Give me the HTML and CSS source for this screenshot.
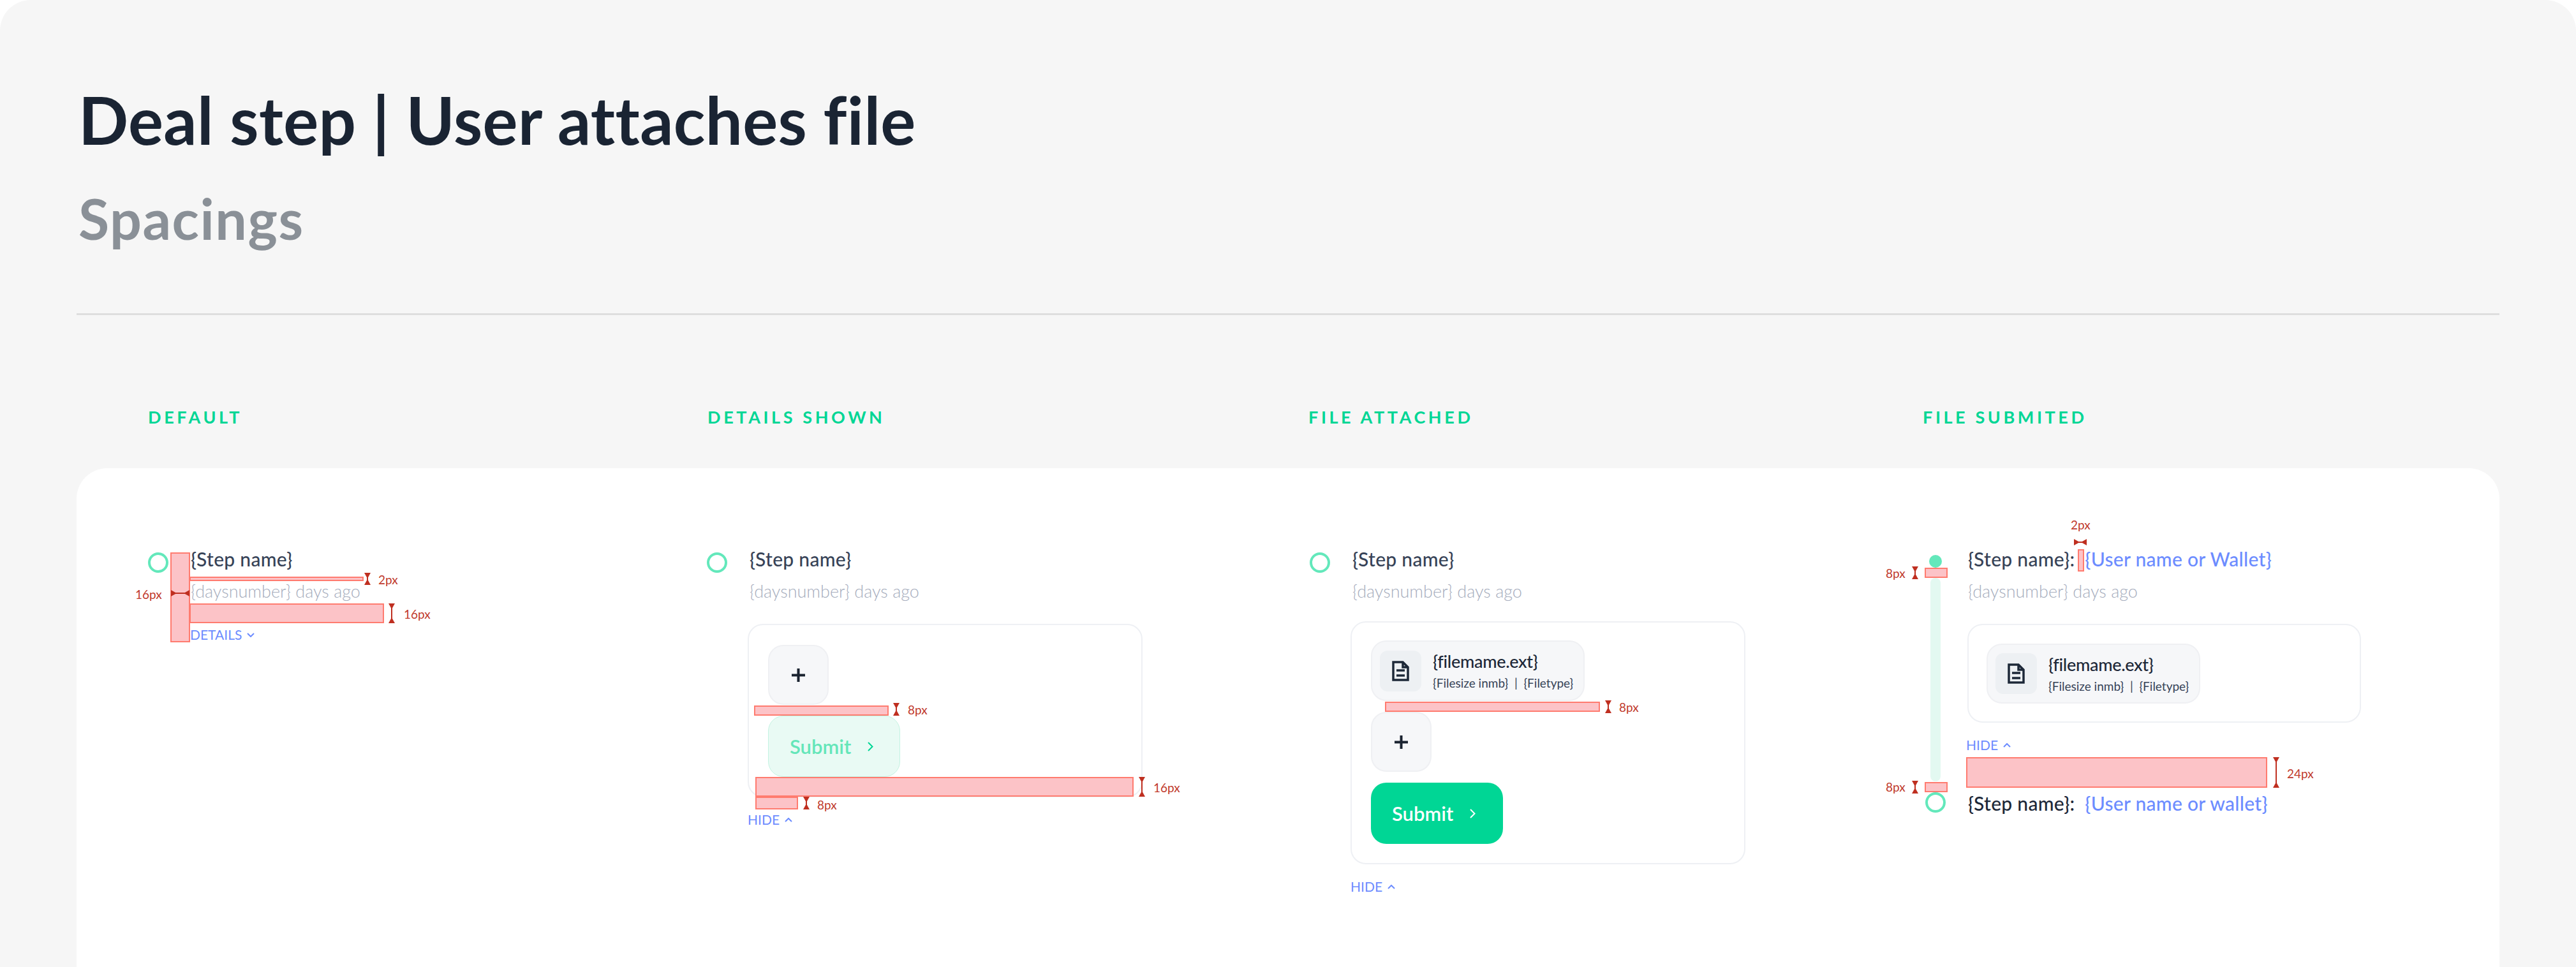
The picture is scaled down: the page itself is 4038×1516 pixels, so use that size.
FILE: index.html
```html
<!DOCTYPE html>
<html lang="en">
<head>
    <meta charset="utf-8">
    <title>Deal step | User attaches file</title>
    <link rel="stylesheet" href="styles.css">
</head>
<body>
<div class="sheet">
    <header class="head">
        <h1 class="title">Deal step | User attaches file</h1>
        <h2 class="subtitle">Spacings</h2>
    </header>
    <div class="states">
        <div class="state-name">DEFAULT</div>
        <div class="state-name">DETAILS SHOWN</div>
        <div class="state-name">FILE ATTACHED</div>
        <div class="state-name">FILE SUBMITED</div>
    </div>

    <main class="card">
        <!-- default -->
        <section class="col">
            <div class="step">
                <span class="node"></span>
                <div class="body">
                    <div class="name">{Step name}</div>
                    <div class="meta">{daysnumber} days ago</div>
                    <a class="toggle toggle-details">DETAILS
                        <svg class="chev" viewBox="0 0 12 7"><path d="M1 1l5 5 5-5"/></svg>
                    </a>
                </div>
            </div>
            <i class="spec d1-a"></i>
            <i class="spec d1-b"></i>
            <i class="spec d1-c"></i>
            <i class="dim-v d1-b-dim"></i>
            <i class="dim-v d1-c-dim"></i>
            <i class="dim-h d1-a-dim"></i>
            <span class="dim-text d1-a-text">16px</span>
            <span class="dim-text d1-b-text">2px</span>
            <span class="dim-text d1-c-text">16px</span>
        </section>

        <!-- details shown -->
        <section class="col">
            <div class="step">
                <span class="node"></span>
                <div class="body">
                    <div class="name">{Step name}</div>
                    <div class="meta">{daysnumber} days ago</div>
                    <div class="box box-details">
                        <div class="add"><svg class="plus" viewBox="0 0 21 21"><path d="M10.500 0v21M0 10.500h21"/></svg></div>
                        <div class="submit submit-off">Submit
                            <svg class="chev-right" viewBox="0 0 9 15"><path d="M1 1l6.500 6.500L1 14"/></svg>
                        </div>
                    </div>
                    <a class="toggle">HIDE
                        <svg class="chev" viewBox="0 0 12 7"><path d="M1 6l5-5 5 5"/></svg>
                    </a>
                </div>
            </div>
            <i class="spec d2-a"></i>
            <i class="spec d2-b"></i>
            <i class="spec d2-c"></i>
            <i class="dim-v d2-a-dim"></i>
            <i class="dim-v d2-b-dim"></i>
            <i class="dim-v d2-c-dim"></i>
            <span class="dim-text d2-a-text">8px</span>
            <span class="dim-text d2-b-text">16px</span>
            <span class="dim-text d2-c-text">8px</span>
        </section>

        <!-- file attached -->
        <section class="col">
            <div class="step">
                <span class="node"></span>
                <div class="body">
                    <div class="name">{Step name}</div>
                    <div class="meta">{daysnumber} days ago</div>
                    <div class="box box-attached">
                        <div class="file">
                            <div class="file-icon">
                                <svg class="doc" viewBox="0 0 27 32"><path d="M2 2h15l8 8v20H2zM17 2v8h8M7 15h13M7 23h13"/></svg>
                            </div>
                            <div>
                                <div class="file-name">{filemame.ext}</div>
                                <div class="file-info">{Filesize inmb}&nbsp; | &nbsp;{Filetype}</div>
                            </div>
                        </div>
                        <div class="add"><svg class="plus" viewBox="0 0 21 21"><path d="M10.500 0v21M0 10.500h21"/></svg></div>
                        <div class="submit">Submit
                            <svg class="chev-right" viewBox="0 0 9 15"><path d="M1 1l6.500 6.500L1 14"/></svg>
                        </div>
                    </div>
                    <a class="toggle">HIDE
                        <svg class="chev" viewBox="0 0 12 7"><path d="M1 6l5-5 5 5"/></svg>
                    </a>
                </div>
            </div>
            <i class="spec d3-a"></i>
            <i class="dim-v d3-a-dim"></i>
            <span class="dim-text d3-a-text">8px</span>
        </section>

        <!-- file submited -->
        <section class="col">
            <div class="step step-done">
                <div class="rail">
                    <span class="dot"></span>
                    <span class="track"></span>
                    <span class="node node-end"></span>
                </div>
                <div class="body">
                    <div class="name">{Step name}: <span class="who">{User name or Wallet}</span></div>
                    <div class="meta">{daysnumber} days ago</div>
                    <div class="box box-done">
                        <div class="file">
                            <div class="file-icon">
                                <svg class="doc" viewBox="0 0 27 32"><path d="M2 2h15l8 8v20H2zM17 2v8h8M7 15h13M7 23h13"/></svg>
                            </div>
                            <div>
                                <div class="file-name">{filemame.ext}</div>
                                <div class="file-info">{Filesize inmb}&nbsp; | &nbsp;{Filetype}</div>
                            </div>
                        </div>
                    </div>
                    <a class="toggle">HIDE
                        <svg class="chev" viewBox="0 0 12 7"><path d="M1 6l5-5 5 5"/></svg>
                    </a>
                    <div class="name name-next">{Step name}: <span class="who">{User name or wallet}</span></div>
                </div>
            </div>
            <i class="spec d4-a"></i>
            <i class="spec d4-b"></i>
            <i class="spec d4-c"></i>
            <i class="spec d4-d"></i>
            <i class="dim-h d4-a-dim"></i>
            <i class="dim-v d4-b-dim"></i>
            <i class="dim-v d4-c-dim"></i>
            <i class="dim-v d4-d-dim"></i>
            <span class="dim-text d4-a-text">2px</span>
            <span class="dim-text d4-b-text">8px</span>
            <span class="dim-text d4-c-text">24px</span>
            <span class="dim-text d4-d-text">8px</span>
        </section>
    </main>
</div>
</body>
</html>
```

FILE: styles.css
```css
* {
    box-sizing: border-box;
}

html, body {
    height: 100%;
}

body {
    margin: 0;
    background: #fff;
    overflow: hidden;
    font-family: "Lato", "Liberation Sans", sans-serif;
}

.sheet {
    display: flex;
    flex-direction: column;
    height: 1516px;
    padding: 0 120px;
    background: #f6f6f6;
    border-radius: 48px 48px 0 0;
}

.head {
    height: 494px;
    padding-top: 125px;
    border-bottom: 3px solid #dedede;
}

.title {
    margin: 0;
    padding-left: 3px;
    font-size: 103px;
    line-height: 124px;
    font-weight: 700;
    letter-spacing: 0.35px;
    color: #1a2433;
}

.subtitle {
    margin: 43px 0 0;
    padding-left: 3px;
    font-size: 88px;
    line-height: 100px;
    font-weight: 700;
    letter-spacing: 1.5px;
    color: #8a9097;
}

.states {
    display: grid;
    grid-template-columns: 877px 942px 963px 1fr;
    height: 240px;
    padding: 140px 0 0 112px;
}

.state-name {
    font-size: 27px;
    line-height: 40px;
    font-weight: 700;
    letter-spacing: 4.6px;
    color: #00d695;
}

.card {
    flex: 1;
    display: grid;
    grid-template-columns: 876px 945px 965px 1fr;
    padding: 124px 0 0 112px;
    background: #fff;
    border-radius: 48px 48px 0 0;
}

/* steps */

.col {
    position: relative;
    height: 420px;
}

.step {
    display: grid;
    grid-template-columns: 32px 1fr;
    column-gap: 35px;
}

.node {
    display: block;
    width: 32px;
    height: 32px;
    margin-top: 8px;
    border: 4px solid #63e8bb;
    border-radius: 50%;
}

.name {
    font-size: 30px;
    line-height: 36px;
    font-weight: 500;
    letter-spacing: 0.3px;
    color: #374357;
}

.who {
    margin-left: 8px;
    color: #6c8cff;
}

.meta {
    margin-top: 15px;
    font-size: 27px;
    line-height: 36px;
    font-weight: 300;
    color: #a5acbc;
}

.toggle {
    display: flex;
    align-items: center;
    gap: 8px;
    margin: 23px 0 0 -3px;
    font-size: 21px;
    line-height: 24px;
    color: #6c8cff;
}

.toggle-details {
    margin: 38px 0 0 -1px;
}

.chev {
    width: 12px;
    height: 7px;
    fill: none;
    stroke: #6c8cff;
    stroke-width: 2;
}

.box {
    display: flex;
    flex-direction: column;
    align-items: flex-start;
    gap: 17px;
    width: 619px;
    margin: 33px 0 0 -3px;
    padding: 31px 30px 30px;
    border: 2px solid #eef0f4;
    border-radius: 24px;
}

.box-attached {
    margin-top: 29px;
    padding-top: 28px;
}

.box-done {
    margin-left: -1px;
    width: 617px;
    padding: 29px 28px 28px;
}

.add {
    display: flex;
    align-items: center;
    justify-content: center;
    width: 95px;
    height: 94px;
    background: #f6f7f9;
    border: 2px solid #eff0f3;
    border-radius: 24px;
}

.plus {
    width: 21px;
    height: 21px;
    fill: none;
    stroke: #1a2330;
    stroke-width: 4;
}

.submit {
    display: flex;
    align-items: center;
    gap: 26px;
    height: 96px;
    padding-left: 33px;
    width: 207px;
    font-size: 31px;
    font-weight: 600;
    color: #fff;
    background: #00d695;
    border-radius: 24px;
}

.submit-off {
    color: #64e6b9;
    background: #e9faf4;
    border: 1px solid #c4f3e2;
}

.chev-right {
    width: 9px;
    height: 15px;
    fill: none;
    stroke: #fff;
    stroke-width: 2;
}

.submit-off .chev-right {
    stroke: #00d695;
}

.file {
    display: flex;
    align-items: center;
    gap: 18px;
    width: 335px;
    height: 95px;
    padding-left: 12px;
    background: #f6f7f9;
    border: 2px solid #eff0f3;
    border-radius: 24px;
}

.box-done .file {
    height: 94px;
}

.file-icon {
    display: flex;
    align-items: center;
    justify-content: center;
    width: 65px;
    height: 64px;
    background: #edf0f3;
    border-radius: 12px;
}

.doc {
    width: 27px;
    height: 32px;
    fill: none;
    stroke: #1d2838;
    stroke-width: 3.500;
}

.file-name {
    font-size: 27px;
    line-height: 34px;
    font-weight: 500;
    letter-spacing: -0.3px;
    color: #1d2838;
}

.file-info {
    margin-top: 5px;
    font-size: 19px;
    line-height: 24px;
    white-space: nowrap;
    color: #374357;
}

/* last column has the rail */

.step-done {
    height: 419px;
}

.rail {
    display: flex;
    flex-direction: column;
    align-items: center;
    padding-top: 12px;
    padding-bottom: 3px;
}

.dot {
    width: 20px;
    height: 20px;
    background: #63e8bb;
    border-radius: 50%;
}

.track {
    flex: 1;
    width: 16px;
    margin: 16px 0 17px;
    background: #e3f9f1;
    border-radius: 8px;
}

.node-end {
    flex: none;
    margin-top: 0;
}

.name-next {
    margin-top: 61px;
    color: #1d2838;
}

/* spacing marks, they lie over the components */

.spec {
    position: absolute;
    background: #fcc3c7;
    border: 2px solid #ff7b6f;
}

.dim-v {
    position: absolute;
    width: 10px;
    background: linear-gradient(#bf2f20, #bf2f20) center / 2px 100% no-repeat;
}

.dim-v::before,
.dim-v::after {
    content: "";
    position: absolute;
    left: 0;
    border-left: 5px solid transparent;
    border-right: 5px solid transparent;
}

.dim-v::before {
    top: 0;
    border-top: 9px solid #bf2f20;
}

.dim-v::after {
    bottom: 0;
    border-bottom: 9px solid #bf2f20;
}

.dim-h {
    position: absolute;
    height: 10px;
    background: linear-gradient(#bf2f20, #bf2f20) center / 100% 2px no-repeat;
}

.dim-h::before,
.dim-h::after {
    content: "";
    position: absolute;
    top: 0;
    border-top: 5px solid transparent;
    border-bottom: 5px solid transparent;
}

.dim-h::before {
    left: 0;
    border-left: 9px solid #bf2f20;
}

.dim-h::after {
    right: 0;
    border-right: 9px solid #bf2f20;
}

.dim-text {
    position: absolute;
    font-size: 19px;
    line-height: 24px;
    color: #c0392b;
}

.d1-a { left: 35px; top: 8px; width: 31px; height: 141px; }
.d1-b { left: 65px; top: 46px; width: 273px; height: 7px; }
.d1-c { left: 65px; top: 88px; width: 305px; height: 31px; }
.d1-a-dim { left: 36px; top: 67px; width: 29px; }
.d1-b-dim { left: 339px; top: 40px; height: 19px; }
.d1-c-dim { left: 377px; top: 88px; height: 31px; }
.d1-a-text { left: -20px; top: 62px; }
.d1-b-text { left: 361px; top: 39px; }
.d1-c-text { left: 401px; top: 93px; }

.d2-a { left: 74px; top: 248px; width: 211px; height: 16px; }
.d2-b { left: 76px; top: 360px; width: 593px; height: 31px; }
.d2-c { left: 76px; top: 391px; width: 67px; height: 20px; }
.d2-a-dim { left: 292px; top: 244px; height: 20px; }
.d2-b-dim { left: 677px; top: 360px; height: 31px; }
.d2-c-dim { left: 151px; top: 391px; height: 20px; }
.d2-a-text { left: 315px; top: 243px; }
.d2-b-text { left: 700px; top: 365px; }
.d2-c-text { left: 173px; top: 392px; }

.d3-a { left: 118px; top: 242px; width: 337px; height: 16px; }
.d3-a-dim { left: 463px; top: 240px; height: 20px; }
.d3-a-text { left: 485px; top: 239px; }

.d4-a { left: 239px; top: 3px; width: 10px; height: 35px; }
.d4-b { left: -1px; top: 32px; width: 36px; height: 16px; }
.d4-c { left: 64px; top: 329px; width: 472px; height: 48px; }
.d4-d { left: -1px; top: 368px; width: 36px; height: 16px; }
.d4-a-dim { left: 233px; top: -13px; width: 20px; }
.d4-b-dim { left: -21px; top: 30px; height: 20px; }
.d4-c-dim { left: 545px; top: 329px; height: 48px; }
.d4-d-dim { left: -21px; top: 366px; height: 20px; }
.d4-a-text { left: 228px; top: -47px; }
.d4-b-text { left: -62px; top: 29px; }
.d4-c-text { left: 567px; top: 343px; }
.d4-d-text { left: -62px; top: 364px; }
```
